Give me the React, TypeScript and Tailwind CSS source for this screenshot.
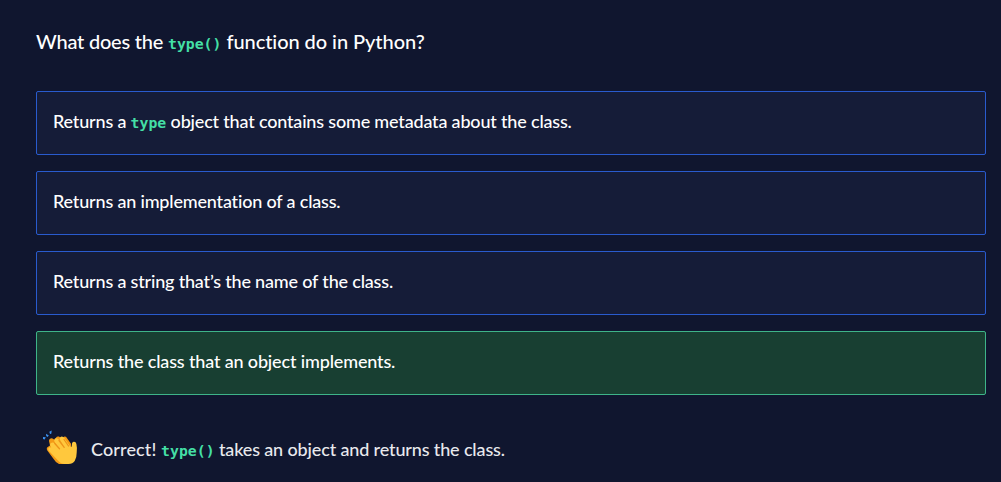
import type { ReactNode } from "react";

function Code({ children }: { children: ReactNode }) {
  return (
    <code className="font-['DejaVu_Sans_Mono','Liberation_Mono',monospace] text-[14.8px] font-bold leading-none tracking-normal text-[#44dfa5]">
      {children}
    </code>
  );
}

function Answer({ children, correct = false }: { children: ReactNode; correct?: boolean }) {
  return (
    <button
      type="button"
      className={
        correct
          ? "flex h-16 items-center rounded-[2px] border border-[#3eb489] bg-[#183f32] px-4 pb-1 text-left tracking-[-0.15px]"
          : "flex h-16 items-center rounded-[2px] border border-[#295bce] bg-[#151c38] px-4 pb-1 text-left tracking-[-0.18px]"
      }
    >
      <span className="whitespace-pre">{children}</span>
    </button>
  );
}

function Clap() {
  return (
    <svg className="h-9 w-9 shrink-0 overflow-visible" viewBox="0 0 36 36" aria-hidden="true">
      <path d="M5.3 19.5q-1.5-2.8 1.2-4L8 14.5 7 10q.2-3 3-2.8L13 9q1-4.500 4-3.400L20 8q1.200-3.500 4-2.200l5 7 1 17.200-8 3h-5q-3-1-5-4.500z" fill="#f39a16" />
      <path d="M9.300 16.500Q7 13.500 9 12q2-1.200 4 1l3 3.300-3.500-5.500q-1-2.500 1-3.500 2-.6 3.500 1.400l4.700 6.300-3.700-6q-1-2.500 1-3.300 2-.6 3.300 1.400l6.200 8.600q1.300 1 1.400-1.700-.2-3 2-3.300 2-.2 2.500 2.300.8 3 .3 8.500 0 5.500-2 8.500-2 3-6.200 3h-4q-3.500 0-6.500-3.500L6.500 19.500q-1-2.500.8-3.300z" fill="#ffc83d" />
      <path d="M12.800 12.500l4.700 5.300M17 9.500l5.200 6.800M22 8.500l4.500 6.500" fill="none" stroke="#ed941a" strokeWidth="1.3" strokeLinecap="round" />
      <path d="M1 6l2.800.3L2.700 8.500 1 8zM4 2.800L6.800 4.500 5.500 6 4.200 5zM7.300.8L9.700-.5 9.300 2.800 8 3z" fill="#3b91ef" />
    </svg>
  );
}

export default function App() {
  return (
    <main className="flex h-[482px] w-full flex-col bg-[#10162f] pl-9 pr-[15px] pt-[27px] font-['Lato',sans-serif] text-[18px] font-medium text-white [font-variant-ligatures:none]">
      <h1 className="h-16 whitespace-pre text-[20px] font-medium leading-7">
        <span className="tracking-[-0.22px]">What does the </span>
        <Code>type()</Code>
        <span className="tracking-[-0.06px]"> function do in Python?</span>
      </h1>
      <div className="flex flex-col gap-4">
        <Answer>Returns a <Code>type</Code> object that contains some metadata about the class.</Answer>
        <Answer>Returns an implementation of a class.</Answer>
        <Answer>Returns a string that’s the name of the class.</Answer>
        <Answer correct>Returns the class that an object implements.</Answer>
      </div>
      <div className="mt-9 flex h-9 items-center gap-[13px] pl-1.5">
        <Clap />
        <p className="whitespace-pre text-[#e8e9ed]">
          <span className="tracking-[0.12px]">Correct! </span>
          <Code>type()</Code>
          <span className="tracking-[-0.14px]"> takes an object and returns the class.</span>
        </p>
      </div>
    </main>
  );
}
